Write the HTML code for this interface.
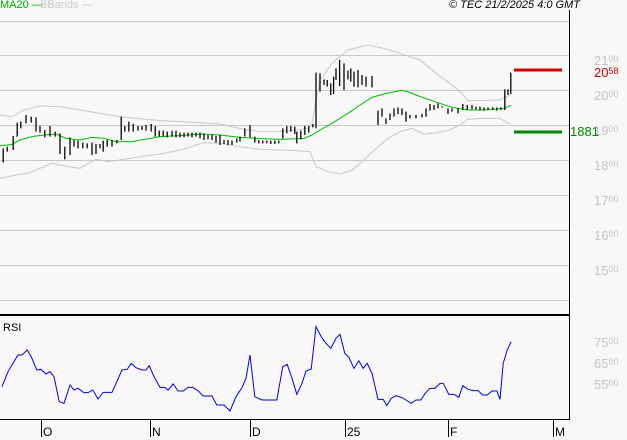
<!DOCTYPE html>
<html><head><meta charset="utf-8"><style>
body{margin:0;background:#f8f8f8;width:627px;height:440px;overflow:hidden;font-family:"Liberation Sans",sans-serif}
svg{position:absolute;left:0;top:0}
.t{position:absolute;font-size:11px;line-height:11px;white-space:nowrap}
.lb{position:absolute;font-size:13px;color:#c4c4c4;line-height:13px}
.lb small{font-size:9px;vertical-align:3px}
</style></head><body>
<svg width="627" height="440" viewBox="0 0 627 440">
<rect width="627" height="440" fill="#f8f8f8"/>
<g stroke="#c8c8c8" stroke-width="1">
<line x1="0" y1="21.5" x2="569" y2="21.5"/><line x1="0" y1="55.5" x2="569" y2="55.5"/><line x1="0" y1="90.5" x2="569" y2="90.5"/><line x1="0" y1="125.5" x2="569" y2="125.5"/><line x1="0" y1="160.5" x2="569" y2="160.5"/><line x1="0" y1="195.5" x2="569" y2="195.5"/><line x1="0" y1="230.5" x2="569" y2="230.5"/><line x1="0" y1="265.5" x2="569" y2="265.5"/><line x1="0" y1="300.5" x2="569" y2="300.5"/>
</g>
<g transform="scale(0.4,0.33333)" fill="none">
<polyline vector-effect="non-scaling-stroke" stroke="#c8c8c8" stroke-width="1" points="0,345 30,350 60,330 100,318 150,320 200,330 230,336 300,350 400,362 450,365 500,368 550,372 600,385 650,395 700,395 740,390 770,385 780,370 790,300 800,240 830,190 870,150 920,135 960,145 1000,160 1050,180 1090,220 1130,255 1155,280 1170,302 1200,302 1250,300 1275,285"/>
<polyline vector-effect="non-scaling-stroke" stroke="#c8c8c8" stroke-width="1" points="0,535 40,525 70,520 130,490 170,500 200,505 240,478 270,485 300,480 350,470 400,462 450,450 510,428 550,430 600,440 650,448 700,450 740,452 775,455 790,500 820,515 850,522 880,510 910,480 940,445 970,415 1000,395 1030,385 1060,403 1090,398 1120,392 1150,375 1170,358 1200,355 1250,355 1275,372"/>
<polyline vector-effect="non-scaling-stroke" stroke="#00bb00" stroke-width="1" points="0,438 30,433 50,420 80,410 110,405 140,402 165,415 200,420 230,412 260,415 290,425 330,425 400,410 450,407 500,402 550,405 600,412 640,415 700,418 760,415 780,405 800,390 830,370 870,340 900,315 930,292 960,282 1000,272 1015,273 1040,285 1080,302 1130,322 1170,330 1210,330 1260,325 1278,316"/>
<path stroke="#000" stroke-width="3.2" d="M8 445V488M18 440V455M33 408V450M43 368V410M52 365V385M65 345V370M78 350V368M90 352V395M100 378V398M112 390V412M125 378V410M138 395V410M150 400V462M162 440V478M175 412V465M185 420V440M195 422V445M207 428V445M218 430V445M230 428V465M240 432V462M250 432V445M258 422V455M268 420V440M280 420V440M292 420V430M303 350V420M312 378V395M322 365V395M333 372V395M345 378V392M355 378V390M365 375V392M378 372V395M388 378V410M398 392V410M408 392V410M418 395V412M430 392V410M440 392V412M450 398V412M460 398V412M470 398V410M480 398V412M490 398V410M500 398V415M510 400V420M520 405V418M530 405V420M540 408V428M550 405V435M560 420V432M570 420V435M580 422V435M592 415V428M600 410V425M612 385V410M625 375V412M637 410V428M647 420V430M657 422V430M667 422V430M677 422V432M687 422V432M697 422V430M707 385V415M717 378V400M727 378V395M737 380V402M742 395V430M752 392V418M762 378V405M772 378V398M782 372V382M790 218V385M800 220V275M810 238V255M818 240V260M827 250V285M834 230V282M840 205V240M849 180V258M860 190V270M870 212V238M877 205V245M885 215V260M895 210V262M905 225V255M915 230V260M930 228V262M945 332V375M955 325V350M965 355V372M975 340V360M985 325V350M995 322V342M1005 325V345M1015 335V365M1025 345V355M1040 345V355M1055 342V352M1065 325V350M1075 312V332M1085 315V330M1095 310V325M1105 318V322M1120 325V342M1130 325V335M1145 325V340M1157 312V330M1168 315V330M1180 315V328M1190 320V328M1200 320V330M1210 322V332M1220 322V330M1232 322V330M1242 322V332M1252 322V330M1262 268V330M1270 268V285M1277 218V282"/>
<polyline vector-effect="non-scaling-stroke" stroke="#0000dd" stroke-width="1" transform="translate(0,900)" points="5,260 20,215 30,195 45,165 55,165 68,150 78,170 92,210 102,208 115,222 125,215 135,230 148,305 160,310 175,255 185,270 195,265 210,278 220,278 232,270 245,297 258,277 280,277 292,245 305,210 318,208 328,190 340,203 355,210 365,210 373,197 385,230 400,262 412,262 420,270 433,252 445,273 458,273 470,262 482,262 495,272 508,288 530,288 542,315 560,315 575,333 590,290 605,263 615,235 625,165 637,290 655,300 692,300 707,200 718,193 730,235 742,283 755,250 765,213 778,207 790,80 803,110 815,130 827,145 840,115 850,103 862,160 872,172 885,205 897,182 908,205 918,190 930,220 945,298 958,298 967,317 978,295 990,287 1005,293 1015,300 1028,310 1040,300 1052,300 1063,280 1075,265 1087,265 1100,250 1108,250 1122,283 1135,283 1147,292 1157,257 1170,268 1182,272 1195,272 1207,285 1218,285 1230,273 1242,273 1250,298 1258,190 1268,150 1278,125"/>
</g>
<line x1="514" y1="70" x2="562" y2="70" stroke="#cc0000" stroke-width="3"/>
<line x1="514" y1="132" x2="562" y2="132" stroke="#008800" stroke-width="3"/>
<line x1="569.5" y1="10" x2="569.5" y2="420" stroke="#000"/>
<line x1="0" y1="315" x2="569" y2="315" stroke="#000" stroke-width="2"/>
<line x1="0" y1="419.5" x2="569" y2="419.5" stroke="#000"/>
<g stroke="#000"><line x1="41.5" y1="419" x2="41.5" y2="437"/><line x1="150.5" y1="419" x2="150.5" y2="437"/><line x1="250.5" y1="419" x2="250.5" y2="437"/><line x1="345.5" y1="419" x2="345.5" y2="437"/><line x1="448.5" y1="419" x2="448.5" y2="437"/><line x1="553.5" y1="419" x2="553.5" y2="437"/></g>
</svg>
<div class="t" style="left:0;top:0;color:#00aa00">MA20 —</div>
<div class="t" style="left:40px;top:0;color:#c8c8c8">BBands —</div>
<div class="t" style="left:449px;top:0;font-style:italic;color:#000">© TEC 21/2/2025 4:0 GMT</div>
<div class="lb" style="left:594px;top:53px">21<small>00</small></div>
<div class="lb" style="left:594px;top:88px">20<small>00</small></div>
<div class="lb" style="left:594px;top:123px">19<small>00</small></div>
<div class="lb" style="left:594px;top:158px">18<small>00</small></div>
<div class="lb" style="left:594px;top:193px">17<small>00</small></div>
<div class="lb" style="left:594px;top:228px">16<small>00</small></div>
<div class="lb" style="left:594px;top:263px">15<small>00</small></div>
<div class="lb" style="left:594px;top:65px;color:#cc0000">20<small>58</small></div>
<div class="lb" style="left:570px;top:125px;color:#008800">1881</div>
<div class="lb" style="left:594px;top:335px">75<small>00</small></div>
<div class="lb" style="left:594px;top:356px">65<small>00</small></div>
<div class="lb" style="left:594px;top:377px">55<small>00</small></div>
<div class="t" style="left:3px;top:323px;color:#000">RSI</div>
<div class="t" style="left:43px;top:427px;font-size:12px">O</div>
<div class="t" style="left:152px;top:427px;font-size:12px">N</div>
<div class="t" style="left:252px;top:427px;font-size:12px">D</div>
<div class="t" style="left:347px;top:427px;font-size:12px">25</div>
<div class="t" style="left:450px;top:427px;font-size:12px">F</div>
<div class="t" style="left:555px;top:427px;font-size:12px">M</div>
</body></html>
